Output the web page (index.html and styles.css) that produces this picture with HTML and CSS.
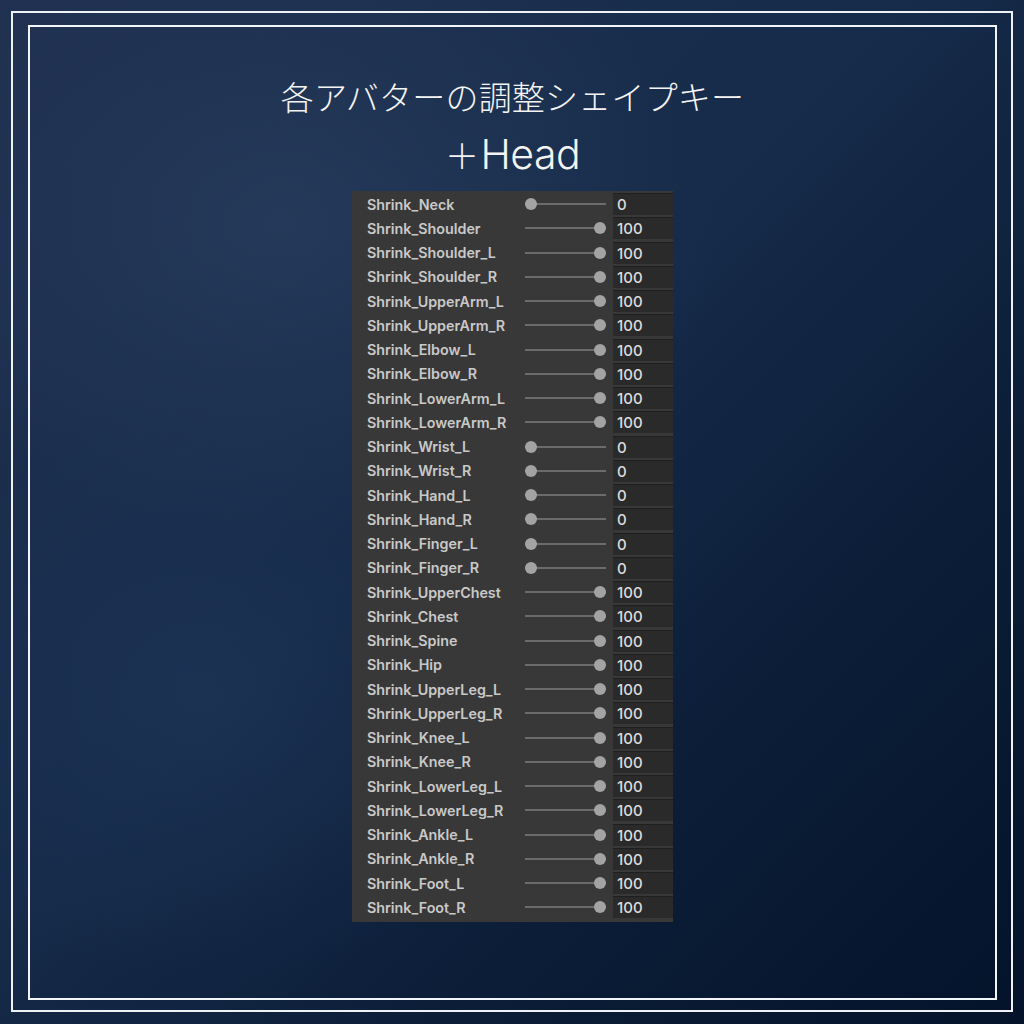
FILE: index.html
```html
<!DOCTYPE html>
<html lang="ja">
<head>
    <meta charset="UTF-8">
    <meta name="viewport" content="width=device-width, initial-scale=1.0">
    <title>調整シェイプキー</title>
    <link rel="stylesheet" href="styles.css">
</head>
<body>
    <div class="marco">
        <div class="marco-interior">
            <h1 class="titulo">各アバターの調整シェイプキー</h1>
            <h2 class="subtitulo"><span class="mas">＋</span>Head</h2>
            <div class="panel" id="panel"></div>
        </div>
    </div>
    <script>
const claves = [
  ["Shrink_Neck", 0], ["Shrink_Shoulder", 100], ["Shrink_Shoulder_L", 100],
  ["Shrink_Shoulder_R", 100], ["Shrink_UpperArm_L", 100], ["Shrink_UpperArm_R", 100],
  ["Shrink_Elbow_L", 100], ["Shrink_Elbow_R", 100], ["Shrink_LowerArm_L", 100],
  ["Shrink_LowerArm_R", 100], ["Shrink_Wrist_L", 0], ["Shrink_Wrist_R", 0],
  ["Shrink_Hand_L", 0], ["Shrink_Hand_R", 0], ["Shrink_Finger_L", 0],
  ["Shrink_Finger_R", 0], ["Shrink_UpperChest", 100], ["Shrink_Chest", 100],
  ["Shrink_Spine", 100], ["Shrink_Hip", 100], ["Shrink_UpperLeg_L", 100],
  ["Shrink_UpperLeg_R", 100], ["Shrink_Knee_L", 100], ["Shrink_Knee_R", 100],
  ["Shrink_LowerLeg_L", 100], ["Shrink_LowerLeg_R", 100], ["Shrink_Ankle_L", 100],
  ["Shrink_Ankle_R", 100], ["Shrink_Foot_L", 100], ["Shrink_Foot_R", 100]
];

const panel = document.getElementById("panel");

// una fila por cada clave: nombre, deslizador y valor
claves.forEach(([nombre, valor]) => {
  const fila = document.createElement("div");
  fila.className = "fila";
  fila.innerHTML = `
    <span class="nombre">${nombre}</span>
    <span class="deslizador"><span class="pomo" style="--v:${valor / 100}"></span></span>
    <span class="valor">${valor}</span>`;
  panel.appendChild(fila);
});
    </script>
</body>
</html>
```

FILE: styles.css
```css
/* -------------------------fondo------------------------ */
html,
body {
    margin: 0;
    height: 100%;
}

body {
    width: 1024px;
    height: 1024px;
    box-sizing: border-box;
    padding: 11px 11px 12px 11px;
    background:
        radial-gradient(ellipse 60% 45% at 28% 22%, rgba(45, 66, 100, 0.55), transparent 70%),
        radial-gradient(ellipse 45% 40% at 20% 68%, rgba(32, 56, 92, 0.5), transparent 70%),
        linear-gradient(135deg, #1f3050 0%, #162b4a 45%, #0c1e38 70%, #04132a 100%);
    font-family: "Inter", "Noto Sans", sans-serif;
}

/* doble línea blanca del marco */
.marco {
    height: 100%;
    box-sizing: border-box;
    border: 2px solid #eef2f7;
    padding: 12px 14px 10px 15px;
}

.marco-interior {
    height: 100%;
    box-sizing: border-box;
    border: 2px solid #f2f5f9;
    display: flex;
    flex-direction: column;
    align-items: center;
}

.titulo {
    margin: 45px 0 0;
    font-family: "Noto Sans CJK JP", sans-serif;
    font-weight: 300;
    font-size: 33px;
    line-height: 48px;
    color: #f4f4f4;
    letter-spacing: 0.2px;
}

.subtitulo {
    margin: 8px 0 0;
    font-family: "Inter", "Noto Sans", sans-serif;
    font-weight: 300;
    font-size: 41px;
    line-height: 52px;
    color: #f4f4f4;
    letter-spacing: -0.5px;
}

.mas {
    font-family: "Noto Sans CJK JP", sans-serif;
    font-weight: 300;
    font-size: 34px;
    margin-right: 2px;
}

/* -------------------------panel------------------------ */
.panel {
    margin-top: 10px;
    width: 321px;
    box-sizing: border-box;
    padding: 1px 0 2px 15px;
    background-color: #383838;
}

.fila {
    display: flex;
    align-items: center;
    height: 24.25px;
}

.nombre {
    width: 158px;
    font-size: 14.3px;
    font-weight: 600;
    color: #c9c9c9;
    white-space: nowrap;
}

.deslizador {
    position: relative;
    width: 81px;
    height: 2px;
    margin-right: 7px;
    background-color: #6b6b6b;
}

.pomo {
    position: absolute;
    top: -5px;
    left: calc(var(--v) * 69px);
    width: 12px;
    height: 12px;
    border-radius: 50%;
    background-color: #a3a3a3;
}

.valor {
    width: 60px;
    height: 22px;
    box-sizing: border-box;
    padding-left: 4px;
    background-color: #2a2a2a;
    border-top: 1px solid #1f1f1f;
    font-size: 15px;
    font-weight: 500;
    line-height: 21px;
    color: #dcdcdc;
}
```
